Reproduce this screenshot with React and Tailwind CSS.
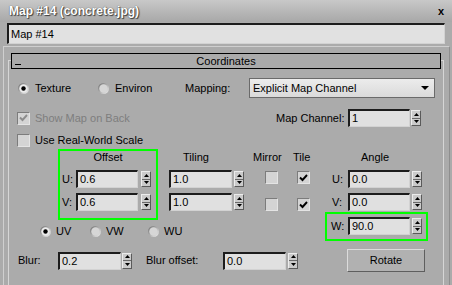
import React from 'react';

const Spinner = () => (
  <div className="flex h-[16px] w-[10px] flex-col border border-t-[#ececec] border-l-[#ececec] border-b-[#5a5a5a] border-r-[#5a5a5a] bg-[#cbcbcb]">
    <div className="flex flex-1 items-center justify-center border-b border-b-[#6a6a6a]">
      <svg width="5" height="3" viewBox="0 0 5 3"><path d="M2.5 0L5 3H0z" fill="#000" /></svg>
    </div>
    <div className="flex flex-1 items-center justify-center">
      <svg width="5" height="3" viewBox="0 0 5 3"><path d="M0 0H5L2.5 3z" fill="#000" /></svg>
    </div>
  </div>
);

const SpinField = ({ value, wide, gap }) => (
  <div className="flex items-start">
    <div className={`flex h-[18px] items-center border-t-2 border-l-2 border-t-[#1c1c1c] border-l-[#1c1c1c] border-b border-r border-b-[#d2d2d2] border-r-[#d2d2d2] bg-[#e0e0e0] pl-[2px] ${wide ? 'w-[63px]' : 'w-[62px]'}`}>
      {value}
    </div>
    <div className={`mt-[1px] ${gap === 1 ? 'ml-[1px]' : gap === 3 ? 'ml-[3px]' : 'ml-[2px]'}`}>
      <Spinner />
    </div>
  </div>
);

const Check = ({ checked, disabled }) => (
  <div className="flex h-[13px] w-[13px] items-center justify-center border border-t-[#7c7c7c] border-l-[#7c7c7c] border-b-[#e4e4e4] border-r-[#e4e4e4] bg-[#d4d4d4]">
    {checked && (
      <svg width="9" height="8" viewBox="0 0 9 8">
        <path d="M1 3.5L3.5 6L8 1" stroke={disabled ? '#8c8c8c' : '#000'} strokeWidth="1.9" fill="none" />
      </svg>
    )}
  </div>
);

const Radio = ({ on, id }) => (
  <svg width="11" height="11" viewBox="0 0 11 11">
    <defs>
      <linearGradient id={id} x1="0" y1="0" x2="1" y2="1">
        <stop offset="0" stopColor="#6a6a6a" />
        <stop offset="1" stopColor="#f4f4f4" />
      </linearGradient>
    </defs>
    <circle cx="5.5" cy="5.5" r="5.5" fill={`url(#${id})`} />
    <circle cx="5.5" cy="5.5" r="4.2" fill={on ? '#ececec' : '#d6d6d6'} />
    {on && <circle cx="5.5" cy="5.5" r="2.2" fill="#000" />}
  </svg>
);

export default function App() {
  return (
    <div className="h-[285px] w-[452px] overflow-hidden bg-[#ababab] font-['Liberation_Sans',Arial,sans-serif] text-[11px] leading-[13px] text-black">
      <div className="flex h-[22px] items-center justify-between bg-gradient-to-b from-[#c8c8c8] to-[#a8a8a8] pl-[9px] pr-[8px]">
        <span className="text-[12px] font-bold text-white [text-shadow:1px_1px_1px_#3c3c3c,0_0_1px_#3c3c3c]">Map #14 (concrete.jpg)</span>
        <span className="text-[11px] font-bold">x</span>
      </div>

      <div className="ml-[7px] mt-[1px] flex h-[21px] w-[438px] items-center border-t-2 border-l-2 border-t-[#1c1c1c] border-l-[#1c1c1c] border-b border-r border-b-[#d2d2d2] border-r-[#d2d2d2] bg-[#e1e1e1] pl-[2px]">
        Map #14
      </div>

      <div className="ml-[3px] mt-[2px] h-[240px] w-[447px] border-t border-l border-r border-t-[#cfcfcf] border-l-[#cfcfcf] border-r-[#8e8e8e]">
        <div className="relative z-10 ml-[7px] mt-[6px] flex h-[16px] w-[430px] items-center border border-black bg-[#ababab]">
          <div className="ml-[3px] mt-[6px] h-[1px] w-[6px] bg-black" />
          <div className="flex-1 text-center pr-[9px]">Coordinates</div>
        </div>

        <div className="-mt-[9px] ml-[4px] h-[230px] w-[436px] border-t border-l border-r border-[#d6d6d6] pt-[17px]">
          <div className="flex h-[20px] items-center pl-[9px]">
            <div className="flex w-[80px] items-center gap-[6px]">
              <Radio on id="r1" />
              <span>Texture</span>
            </div>
            <div className="flex w-[87px] items-center gap-[6px]">
              <Radio id="r2" />
              <span>Environ</span>
            </div>
            <div className="w-[64px]">Mapping:</div>
            <div className="flex h-[20px] w-[186px] items-center justify-between border border-[#6a6a6a] bg-gradient-to-b from-[#ececec] to-[#dadada] pl-[3px] pr-[5px]">
              <span>Explicit Map Channel</span>
              <svg width="8" height="4" viewBox="0 0 8 4"><path d="M0 0H8L4 4z" fill="#000" /></svg>
            </div>
          </div>

          <div className="mt-[11px] flex h-[18px] items-center pl-[8px]">
            <div className="flex w-[259px] items-center gap-[5px]">
              <Check checked disabled />
              <span className="text-[#7e7e7e]">Show Map on Back</span>
            </div>
            <div className="w-[72px]">Map Channel:</div>
            <SpinField value="1" gap={1} />
          </div>

          <div className="mt-[7px] flex h-[13px] items-center gap-[5px] pl-[8px]">
            <Check />
            <span>Use Real-World Scale</span>
          </div>

          <div className="mt-[2px] flex">
            <div className="w-[316px]">
              <div className="flex pl-[49px]">
                <div className="h-[71px] w-[100px] border-2 border-[#00ff00]">
                  <div className="text-center">Offset</div>
                  <div className="mt-[6px] flex items-start pl-[2px]">
                    <span className="w-[14px] pt-[3px]">U:</span>
                    <SpinField value="0.6" gap={3} />
                  </div>
                  <div className="mt-[5px] flex items-start pl-[2px]">
                    <span className="w-[14px] pt-[3px]">V:</span>
                    <SpinField value="0.6" gap={3} />
                  </div>
                </div>

                <div className="ml-[11px] pt-[2px]">
                  <div className="pl-[14px]">Tiling</div>
                  <div className="mt-[6px]"><SpinField value="1.0" wide /></div>
                  <div className="mt-[5px]"><SpinField value="1.0" wide /></div>
                </div>

                <div className="ml-[6px] w-[34px] pt-[2px]">
                  <div className="pl-[3px]">Mirror</div>
                  <div className="ml-[15px] mt-[7px]"><Check /></div>
                  <div className="ml-[15px] mt-[14px]"><Check /></div>
                </div>

                <div className="ml-[9px] pt-[2px]">
                  <div>Tile</div>
                  <div className="ml-[4px] mt-[7px]"><Check checked /></div>
                  <div className="ml-[4px] mt-[14px]"><Check checked /></div>
                </div>
              </div>

              <div className="mt-[6px] flex h-[11px] items-center pl-[31px]">
                <div className="flex w-[50px] items-center gap-[5px]">
                  <Radio on id="r3" />
                  <span>UV</span>
                </div>
                <div className="flex w-[58px] items-center gap-[5px]">
                  <Radio id="r4" />
                  <span>VW</span>
                </div>
                <div className="flex items-center gap-[5px]">
                  <Radio id="r5" />
                  <span>WU</span>
                </div>
              </div>
            </div>

            <div className="w-[103px] pt-[2px]">
              <div className="pl-[36px]">Angle</div>
              <div className="mt-[6px] flex items-start pl-[7px]">
                <span className="w-[16px] pt-[3px]">U:</span>
                <SpinField value="0.0" />
              </div>
              <div className="mt-[5px] flex items-start pl-[7px]">
                <span className="w-[16px] pt-[3px]">V:</span>
                <SpinField value="0.0" />
              </div>
              <div className="mt-[1px] flex h-[29px] w-[103px] items-start border-2 border-[#00ff00] pl-[4px] pt-[3px]">
                <span className="w-[17px] pt-[3px]">W:</span>
                <SpinField value="90.0" />
              </div>
            </div>
          </div>

          <div className="mt-[8px] flex h-[23px] items-center pl-[9px]">
            <div className="w-[40px]">Blur:</div>
            <SpinField value="0.2" wide gap={1} />
            <div className="ml-[14px] w-[77px]">Blur offset:</div>
            <SpinField value="0.0" wide />
            <div className="ml-[49px] flex h-[23px] w-[78px] items-center justify-center border border-t-[#dcdcdc] border-l-[#dcdcdc] border-b-[#5e5e5e] border-r-[#5e5e5e] bg-[#b1b1b1]">
              Rotate
            </div>
          </div>
        </div>
      </div>
    </div>
  );
}
